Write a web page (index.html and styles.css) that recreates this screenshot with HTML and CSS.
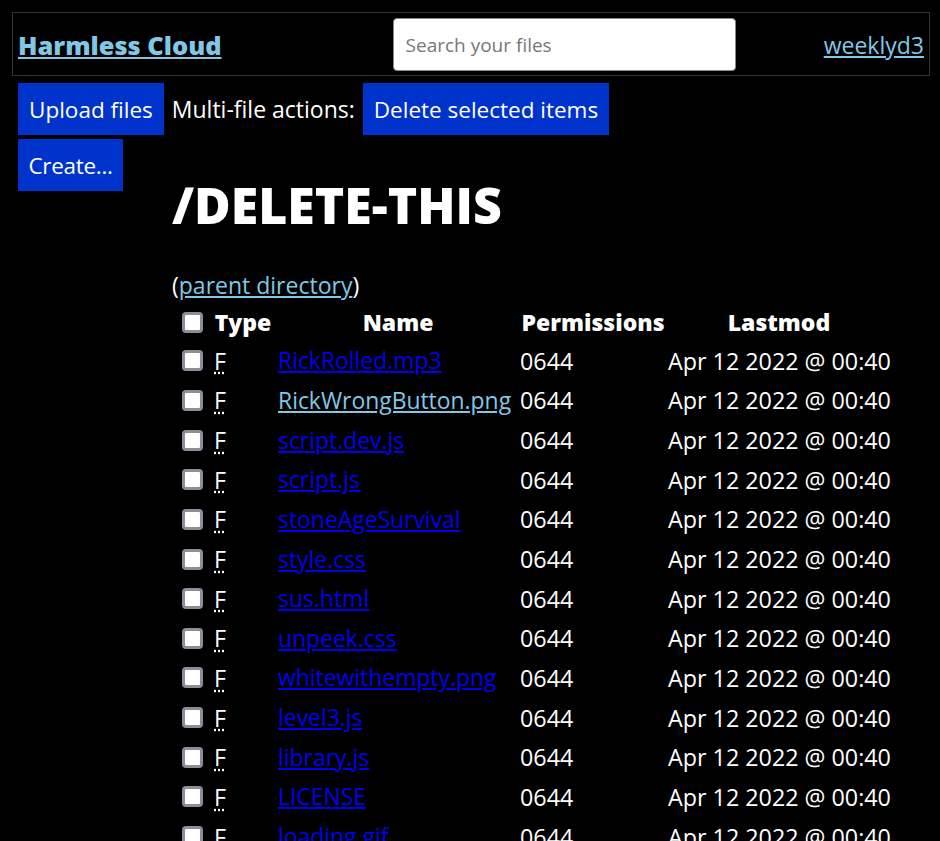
FILE: index.html
```html
<!DOCTYPE html>
<html lang="en">
<head>
<meta charset="utf-8">
<title>Harmless Cloud</title>
<link rel="stylesheet" href="styles.css">
</head>
<body>
<header class="topbar">
  <a class="brand" href="#">Harmless Cloud</a>
  <input class="search" type="text" placeholder="Search your files">
  <a class="user" href="#">weeklyd3</a>
</header>
<div class="toolbar">
  <button class="btn">Upload files</button>
  <span class="label">Multi-file actions:</span>
  <button class="btn">Delete selected items</button>
</div>
<div class="layout">
  <aside class="side">
    <button class="btn btn-create">Create...</button>
  </aside>
  <main class="main">
    <h1 class="dir">/DELETE-THIS</h1>
    <p class="parent">(<a class="visited" href="#">parent directory</a>)</p>
    <table class="files">
      <colgroup>
        <col class="c-check"><col class="c-type"><col class="c-name"><col class="c-perm"><col class="c-mod">
      </colgroup>
      <thead>
        <tr><th class="chk"><span class="box"></span></th><th>Type</th><th>Name</th><th>Permissions</th><th>Lastmod</th></tr>
      </thead>
      <tbody>
        <tr><td class="chk"><span class="box"></span></td><td class="type"><abbr>F</abbr></td><td class="name"><a href="#">RickRolled.mp3</a></td><td class="perm">0644</td><td>Apr 12 2022 @ 00:40</td></tr>
        <tr><td class="chk"><span class="box"></span></td><td class="type"><abbr>F</abbr></td><td class="name"><a class="visited" href="#">RickWrongButton.png</a></td><td class="perm">0644</td><td>Apr 12 2022 @ 00:40</td></tr>
        <tr><td class="chk"><span class="box"></span></td><td class="type"><abbr>F</abbr></td><td class="name"><a href="#">script.dev.js</a></td><td class="perm">0644</td><td>Apr 12 2022 @ 00:40</td></tr>
        <tr><td class="chk"><span class="box"></span></td><td class="type"><abbr>F</abbr></td><td class="name"><a href="#">script.js</a></td><td class="perm">0644</td><td>Apr 12 2022 @ 00:40</td></tr>
        <tr><td class="chk"><span class="box"></span></td><td class="type"><abbr>F</abbr></td><td class="name"><a href="#">stoneAgeSurvival</a></td><td class="perm">0644</td><td>Apr 12 2022 @ 00:40</td></tr>
        <tr><td class="chk"><span class="box"></span></td><td class="type"><abbr>F</abbr></td><td class="name"><a href="#">style.css</a></td><td class="perm">0644</td><td>Apr 12 2022 @ 00:40</td></tr>
        <tr><td class="chk"><span class="box"></span></td><td class="type"><abbr>F</abbr></td><td class="name"><a href="#">sus.html</a></td><td class="perm">0644</td><td>Apr 12 2022 @ 00:40</td></tr>
        <tr><td class="chk"><span class="box"></span></td><td class="type"><abbr>F</abbr></td><td class="name"><a href="#">unpeek.css</a></td><td class="perm">0644</td><td>Apr 12 2022 @ 00:40</td></tr>
        <tr><td class="chk"><span class="box"></span></td><td class="type"><abbr>F</abbr></td><td class="name"><a href="#">whitewithempty.png</a></td><td class="perm">0644</td><td>Apr 12 2022 @ 00:40</td></tr>
        <tr><td class="chk"><span class="box"></span></td><td class="type"><abbr>F</abbr></td><td class="name"><a href="#">level3.js</a></td><td class="perm">0644</td><td>Apr 12 2022 @ 00:40</td></tr>
        <tr><td class="chk"><span class="box"></span></td><td class="type"><abbr>F</abbr></td><td class="name"><a href="#">library.js</a></td><td class="perm">0644</td><td>Apr 12 2022 @ 00:40</td></tr>
        <tr><td class="chk"><span class="box"></span></td><td class="type"><abbr>F</abbr></td><td class="name"><a href="#">LICENSE</a></td><td class="perm">0644</td><td>Apr 12 2022 @ 00:40</td></tr>
        <tr><td class="chk"><span class="box"></span></td><td class="type"><abbr>F</abbr></td><td class="name"><a href="#">loading.gif</a></td><td class="perm">0644</td><td>Apr 12 2022 @ 00:40</td></tr>
      </tbody>
    </table>
  </main>
</div>
</body>
</html>
```
FILE: styles.css
```css
html, body {
  background: #000;
}
body {
  margin: 12px 10px 12px 12px;
  color: #fff;
  font-family: "Open Sans", "Noto Sans", sans-serif;
  font-size: 23px;
  overflow: hidden;
}
a {
  color: #0000ee;
}
a.visited {
  color: #80c8e6;
}
.topbar {
  display: flex;
  align-items: center;
  border: 1px solid #333;
  padding: 5px 5px 4px 5px;
}
.brand {
  font-family: "Open Sans", sans-serif;
  font-weight: 800;
  font-size: 25.4px;
  color: #80c8e6;
}
.search {
  margin-left: 171px;
  width: 343px;
  height: 53px;
  box-sizing: border-box;
  border: 1px solid #888;
  border-radius: 4px;
  padding: 0 12px;
  font-family: inherit;
  font-size: 19px;
  background: #fff;
}
.search::placeholder {
  color: #777;
}
.user {
  margin-left: auto;
  color: #80c8e6;
  font-size: 23px;
}
.toolbar {
  display: flex;
  align-items: center;
  gap: 8px;
  padding: 7px 6px 0 6px;
}
.btn {
  background: #0033cc;
  color: #fff;
  border: none;
  font-family: inherit;
  font-size: 22.5px;
  height: 52px;
  padding: 0 11px;
}
.btn-create {
  padding: 0 10.5px;
  letter-spacing: -0.3px;
}
.layout {
  display: flex;
  padding: 4px 6px 0 6px;
}
.side {
  width: 154px;
  flex: none;
}
.main {
  flex: 1;
}
.dir {
  font-family: "Open Sans", sans-serif;
  font-weight: 800;
  font-size: 50px;
  line-height: 1;
  margin: 41px 0 0 0;
}
.parent {
  margin: 39px 0 2px 0;
}
.files {
  border-collapse: collapse;
  table-layout: fixed;
  width: 718px;
}
.c-check { width: 36px; }
.c-type { width: 70px; }
.c-name { width: 240px; }
.c-perm { width: 150px; }
.c-mod { width: 222px; }
.files th, .files td {
  padding: 0;
  height: 39.65px;
  white-space: nowrap;
}
.files th {
  font-family: "Open Sans", sans-serif;
  font-weight: 800;
  font-size: 23px;
  text-align: center;
  height: 38px;
}
.files td {
  text-align: left;
  font-size: 23.3px;
}
.files td.name {
  font-size: 22.9px;
}
.files td.perm {
  padding-left: 2px;
}
.chk {
  padding-left: 10px !important;
}
.box {
  display: block;
  width: 21px;
  height: 21px;
  box-sizing: border-box;
  background: #fff;
  border: 3px solid #8c8c9a;
  border-radius: 4px;
}
.type {
  padding-left: 6px !important;
}
abbr {
  text-decoration: underline dotted;
  text-underline-offset: 3px;
}
```
